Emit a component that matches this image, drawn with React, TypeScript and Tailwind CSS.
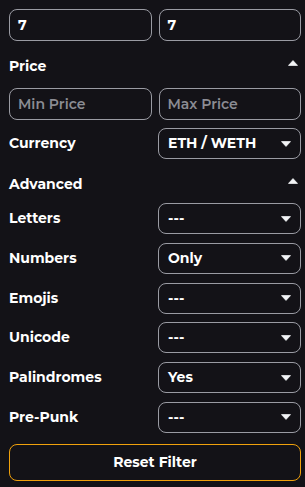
import React from 'react'

const font = { fontFamily: 'Montserrat, Inter, "Open Sans", sans-serif' }

function Caret({ up = false }: { up?: boolean }) {
  return (
    <svg width="10" height="6" viewBox="0 0 10 6" className={up ? '' : 'rotate-180'}>
      <path d="M5 0.6 L9.5 5.4 L0.5 5.4 Z" fill="#f3f4f6" strokeLinejoin="round" stroke="#f3f4f6" strokeWidth="0.8" />
    </svg>
  )
}

function Field({ value, placeholder }: { value?: string; placeholder?: string }) {
  return (
    <div className="flex-1 h-8 rounded-[8px] border border-[#9a9ba3] flex items-center px-[8px] text-[14px] font-bold">
      {value ? <span className="text-white">{value}</span> : <span className="text-[#8b8c93] font-semibold">{placeholder}</span>}
    </div>
  )
}

function Select({ value }: { value: string }) {
  return (
    <div className="w-[143px] h-[31px] rounded-[8px] border border-[#9a9ba3] flex items-center justify-between pl-[9px] pr-[9px] text-[14px] font-bold text-white">
      <span>{value}</span>
      <Caret />
    </div>
  )
}

function Row({ label, value }: { label: string; value: string }) {
  return (
    <div className="flex items-center justify-between">
      <span className="text-[14px] font-bold text-white">{label}</span>
      <Select value={value} />
    </div>
  )
}

function Section({ title }: { title: string }) {
  return (
    <div className="flex items-center justify-between pr-[3px] h-[20px]">
      <span className="text-[14px] font-bold text-white">{title}</span>
      <div className="-mt-[6px]">
        <Caret up />
      </div>
    </div>
  )
}

export default function App() {
  return (
    <div className="min-h-screen w-[305px] bg-[#131217] pl-[9px] pr-[4px] pt-[9px]" style={font}>
      <div className="flex gap-[7px]">
        <Field value="7" />
        <Field value="7" />
      </div>

      <div className="mt-[15px]">
        <Section title="Price" />
      </div>

      <div className="flex gap-[7px] mt-[12px]">
        <Field placeholder="Min Price" />
        <Field placeholder="Max Price" />
      </div>

      <div className="mt-[8px]">
        <Row label="Currency" value="ETH / WETH" />
      </div>

      <div className="mt-[15px]">
        <Section title="Advanced" />
      </div>

      <div className="mt-[9px] flex flex-col gap-[8.8px]">
        <Row label="Letters" value="---" />
        <Row label="Numbers" value="Only" />
        <Row label="Emojis" value="---" />
        <Row label="Unicode" value="---" />
        <Row label="Palindromes" value="Yes" />
        <Row label="Pre-Punk" value="---" />
      </div>

      <button className="mt-[11px] w-full h-[37px] rounded-[8px] border border-[#f0a10c] text-white text-[14px] font-bold">
        Reset Filter
      </button>
    </div>
  )
}
